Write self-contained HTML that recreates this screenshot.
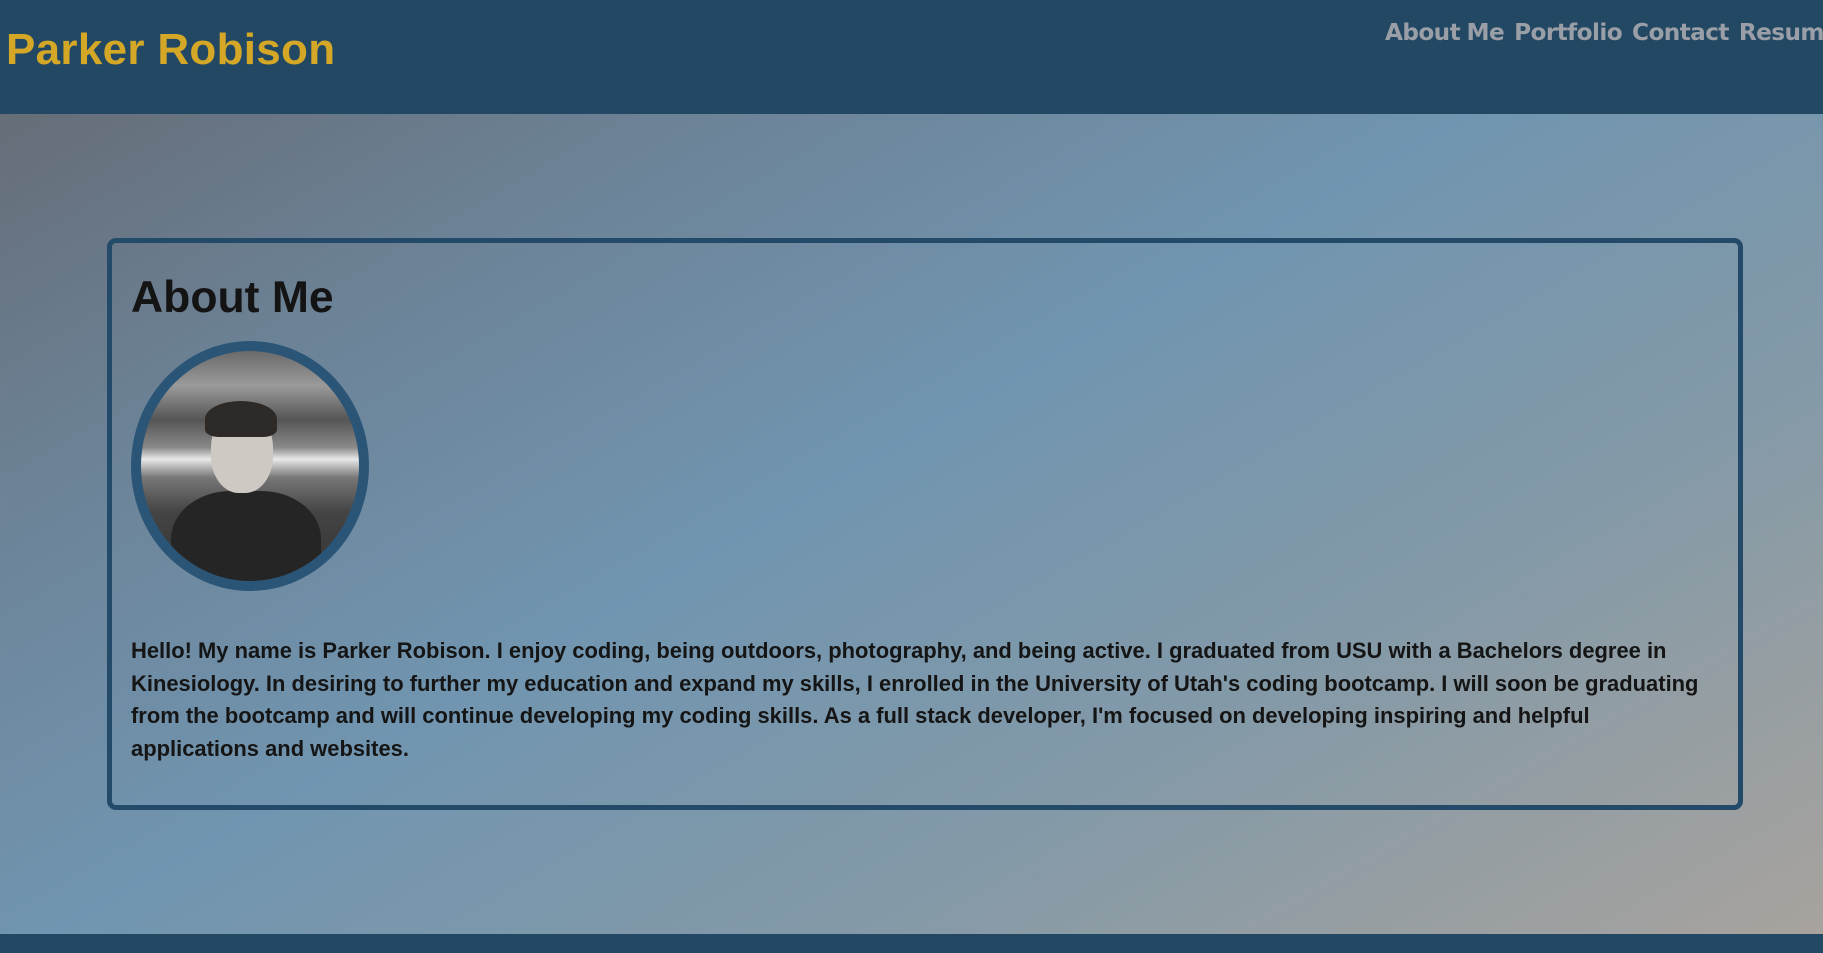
<!DOCTYPE html>
<html><head><meta charset="utf-8"><style>
*{margin:0;padding:0;box-sizing:border-box}
html,body{width:1823px;height:953px;overflow:hidden}
body{font-family:"Liberation Sans",Arial,sans-serif;background:linear-gradient(150deg,#64676f 0%,#6c8296 25%,#7195b0 48%,#8299a8 70%,#a9a39d 100%);position:relative}
header{position:absolute;left:0;top:0;width:1823px;height:114px;background:#224863}
h1.t{position:absolute;left:6px;top:25px;font-size:44px;font-weight:bold;color:#d4a726;letter-spacing:0.3px}
nav{position:absolute;left:1385px;top:19px;font-family:"DejaVu Sans",Verdana,sans-serif;font-weight:bold;font-size:23.2px;color:#9a9ea6;white-space:nowrap;letter-spacing:-0.6px;word-spacing:-1px}
nav span{margin-right:10px}
.card{position:absolute;left:107px;top:238px;width:1636px;height:572px;border:5px solid #234a68;border-radius:9px}
.card h2{position:absolute;left:19px;top:30px;font-size:44.5px;font-weight:bold;color:#141414}
.ph{position:absolute;left:19px;top:98px;width:238px;height:250px;border-radius:50%;border:10px solid #2b5577;overflow:hidden;background:linear-gradient(180deg,#6a6a6a 0%,#9a9a9a 15%,#555 30%,#8a8a8a 42%,#e8e8e8 47%,#777 55%,#444 70%,#333 100%)}
.face{position:absolute;left:70px;top:60px;width:62px;height:82px;border-radius:45%;background:#cfc9c4}
.hair{position:absolute;left:64px;top:50px;width:72px;height:36px;border-radius:50% 50% 20% 20%;background:#2e2a28}
.shirt{position:absolute;left:30px;top:140px;width:150px;height:120px;border-radius:40% 40% 0 0;background:#252525}
.card p{position:absolute;left:19px;top:392px;width:1580px;font-size:21.95px;font-weight:bold;line-height:32.7px;color:#151515}
footer{position:absolute;left:0;top:934px;width:1823px;height:19px;background:#224863}
</style></head><body>
<header><h1 class="t">Parker Robison</h1>
<nav><span>About Me</span><span>Portfolio</span><span>Contact</span><span>Resume</span></nav></header>
<div class="card"><h2>About Me</h2>
<div class="ph"><div class="shirt"></div><div class="face"></div><div class="hair"></div></div>
<p>Hello! My name is Parker Robison. I enjoy coding, being outdoors, photography, and being active. I graduated from USU with a Bachelors degree in Kinesiology. In desiring to further my education and expand my skills, I enrolled in the University of Utah's coding bootcamp. I will soon be graduating from the bootcamp and will continue developing my coding skills. As a full stack developer, I'm focused on developing inspiring and helpful applications and websites.</p>
</div>
<footer></footer>
</body></html>
